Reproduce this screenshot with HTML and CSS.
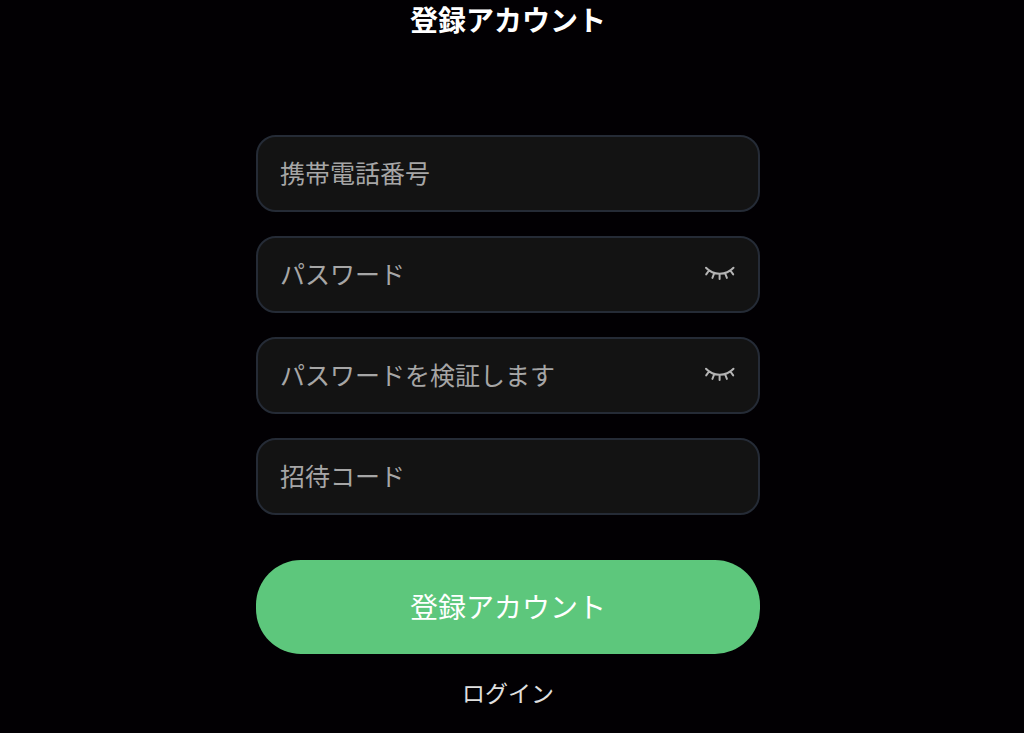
FILE: index.html
```html
<!DOCTYPE html>
<html lang="ja">
<head>
<meta charset="utf-8">
<meta name="viewport" content="width=device-width, initial-scale=1">
<title>登録アカウント</title>
<link rel="stylesheet" href="styles.css">
</head>
<body>
<main class="page">
  <h1 class="title">登録アカウント</h1>
  <form class="form">
    <div class="field">
      <input class="input" type="tel" placeholder="携帯電話番号" aria-label="携帯電話番号">
    </div>
    <div class="field">
      <input class="input" type="password" placeholder="パスワード" aria-label="パスワード">
      <button class="toggle" type="button" aria-label="パスワードを表示">
        <svg class="eye" viewBox="0 0 32 16"><path d="M2 2.7C5.5 6.4 10 8.7 15.6 8.7S26 6.4 29.5 2.7M5 5.5L2.2 9.4M10.3 8L8.4 12.9M15.6 8.7V14M21 8L22.9 12.9M26.4 5.5L29.2 9.4"/></svg>
      </button>
    </div>
    <div class="field">
      <input class="input" type="password" placeholder="パスワードを検証します" aria-label="パスワードを検証します">
      <button class="toggle" type="button" aria-label="確認用パスワードを表示">
        <svg class="eye" viewBox="0 0 32 16"><path d="M2 2.7C5.5 6.4 10 8.7 15.6 8.7S26 6.4 29.5 2.7M5 5.5L2.2 9.4M10.3 8L8.4 12.9M15.6 8.7V14M21 8L22.9 12.9M26.4 5.5L29.2 9.4"/></svg>
      </button>
    </div>
    <div class="field">
      <input class="input" type="text" placeholder="招待コード" aria-label="招待コード">
    </div>
    <button class="submit" type="submit">登録アカウント</button>
  </form>
  <a class="login" href="#">ログイン</a>
</main>
</body>
</html>
```
FILE: styles.css
```css
* {
  box-sizing: border-box;
}

body {
  margin: 0;
  background: #020003;
  color: #fff;
  font-family: "Noto Sans CJK JP", sans-serif;
}

.page {
  display: flex;
  flex-direction: column;
  align-items: center;
  padding: 0 8px 16px 0;
}

.title {
  margin: 0 0 97px;
  font-size: 28px;
  line-height: 38px;
  font-weight: 700;
}

.form {
  display: flex;
  flex-direction: column;
  gap: 24px;
  width: 100%;
  max-width: 504px;
}

.field {
  display: flex;
  align-items: center;
  gap: 16px;
  padding: 0 22px 4px;
  border: 2px solid #252b36;
  border-radius: 20px;
  background: #131313;
}

.input {
  flex: 1;
  min-width: 0;
  height: 69px;
  padding: 0;
  border: 0;
  outline: 0;
  background: transparent;
  color: #fff;
  font-family: inherit;
  font-size: 25px;
}

.input::placeholder {
  color: #a6a6a6;
  opacity: 1;
}

.toggle {
  display: flex;
  padding: 0;
  border: 0;
  background: transparent;
  color: #b4b4b4;
  cursor: pointer;
}

.eye {
  width: 32px;
  height: 16px;
  fill: none;
  stroke: currentColor;
  stroke-width: 2;
  stroke-linecap: round;
}

.submit {
  margin-top: 21px;
  padding: 26px 24px 28px;
  border: 0;
  border-radius: 45px;
  background: #5dc77c;
  color: #fff;
  font-family: inherit;
  font-size: 28px;
  line-height: 40px;
  cursor: pointer;
}

.login {
  margin-top: 20px;
  color: #e0e0e0;
  font-size: 23px;
  line-height: 36px;
  text-decoration: none;
}
```
